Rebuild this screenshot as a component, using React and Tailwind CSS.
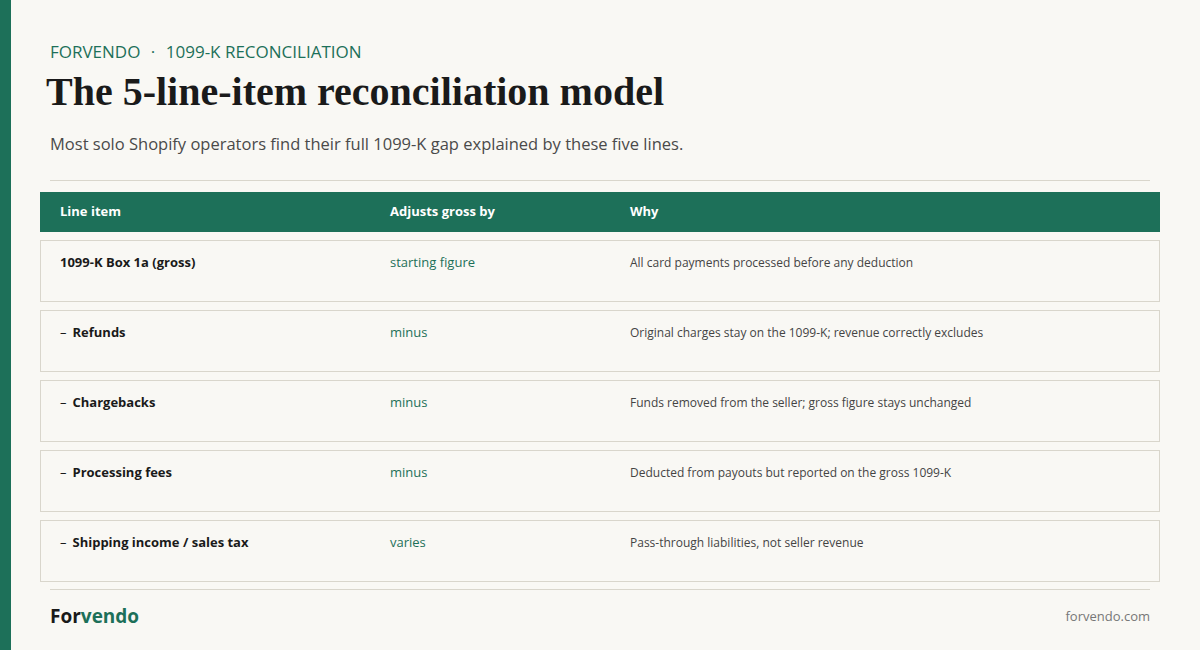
import React from 'react';

const rows = [
  { item: '1099-K Box 1a (gross)', adj: 'starting figure', why: 'All card payments processed before any deduction', minus: false },
  { item: 'Refunds', adj: 'minus', why: 'Original charges stay on the 1099-K; revenue correctly excludes', minus: true },
  { item: 'Chargebacks', adj: 'minus', why: 'Funds removed from the seller; gross figure stays unchanged', minus: true },
  { item: 'Processing fees', adj: 'minus', why: 'Deducted from payouts but reported on the gross 1099-K', minus: true },
  { item: 'Shipping income / sales tax', adj: 'varies', why: 'Pass-through liabilities, not seller revenue', minus: true },
];

export default function App() {
  return (
    <div className="w-[1200px] h-[650px] flex bg-[#f9f8f4] overflow-hidden" style={{ fontFamily: '"Open Sans", sans-serif' }}>
      <div className="w-[11px] bg-[#1d7059] shrink-0" />
      <div className="flex-1 pl-[29px] pr-[40px] pt-[41px] flex flex-col">
        <div className="pl-[10px] text-[17px] leading-[22px] text-[#1d7059]">
          FORVENDO <span className="mx-[6px]">·</span> 1099-K RECONCILIATION
        </div>
        <h1 className="pl-[6px] mt-[6px] leading-[46px] font-bold text-[#1a1a1a]" style={{ fontFamily: '"Liberation Serif", serif', fontSize: '40px' }}>
          The 5-line-item reconciliation model
        </h1>
        <p className="pl-[10px] mt-[18px] text-[16.5px] leading-[22px] text-[#4a4a4a]">
          Most solo Shopify operators find their full 1099-K gap explained by these five lines.
        </p>
        <div className="ml-[10px] mr-[10px] mt-[25px] border-t border-[#d9d6cc]" />
        <div className="mt-[11px] h-[40px] bg-[#1d7059] flex items-center text-white text-[13px] font-bold">
          <div className="w-[350px] pl-[20px]">Line item</div>
          <div className="w-[240px]">Adjusts gross by</div>
          <div>Why</div>
        </div>
        <div className="mt-[8px] flex flex-col gap-[8px]">
          {rows.map((r) => (
            <div key={r.item} className="h-[62px] border border-[#d9d6cc] flex pt-[12px] text-[13px]">
              <div className="w-[349px] pl-[19px] font-bold text-[#1a1a1a]">
                {r.minus && <span className="mr-[6px] font-normal">–</span>}
                {r.item}
              </div>
              <div className="w-[240px] text-[#1d7059]">{r.adj}</div>
              <div className="text-[12px] text-[#444] pt-[1px]">{r.why}</div>
            </div>
          ))}
        </div>
        <div className="mx-[10px] mt-[7px] border-t border-[#d9d6cc]" />
        <div className="mx-[10px] mt-[12px] flex items-center justify-between">
          <div className="text-[19px] font-bold text-[#1a1a1a]">For<span className="text-[#1d7059]">vendo</span></div>
          <div className="text-[13px] text-[#777]">forvendo.com</div>
        </div>
      </div>
    </div>
  );
}
